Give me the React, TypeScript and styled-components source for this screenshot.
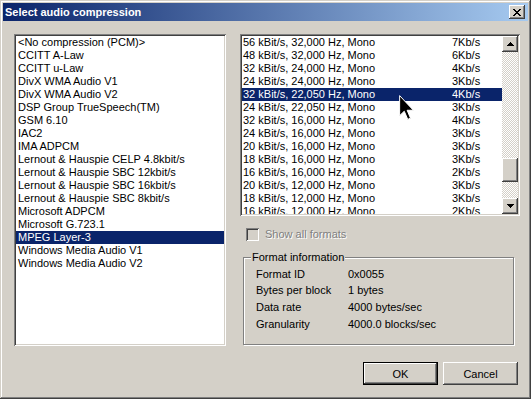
import React from "react";
import styled, { createGlobalStyle, css } from "styled-components";

const FACE = "#d4d0c8";

const GlobalStyle = createGlobalStyle`
  html, body {
    margin: 0;
    padding: 0;
    background: ${FACE};
  }
  body {
    font-family: "Liberation Sans", Arial, sans-serif;
    font-size: 11px;
    color: #000;
  }
  * {
    box-sizing: border-box;
  }
`;

// classic 3d edges
const raised = css`
  box-shadow: inset -1px -1px #404040, inset 1px 1px #fff, inset -2px -2px #808080,
    inset 2px 2px ${FACE};
`;
const sunken = css`
  box-shadow: inset 1px 1px #808080, inset -1px -1px #fff, inset 2px 2px #404040,
    inset -2px -2px ${FACE};
`;

const Window = styled.div`
  width: 531px;
  height: 399px;
  padding: 3px;
  display: flex;
  flex-direction: column;
  background: ${FACE};
  box-shadow: inset -1px -1px #404040, inset 1px 1px ${FACE}, inset -2px -2px #808080,
    inset 2px 2px #fff;
`;

const TitleBar = styled.div`
  height: 18px;
  display: flex;
  align-items: center;
  justify-content: space-between;
  padding: 0 3px 0 2px;
  background: linear-gradient(to right, #0a246a, #a6caf0);
`;

const TitleText = styled.span`
  color: #fff;
  font-weight: bold;
  font-size: 11px;
  white-space: nowrap;
`;

const CloseButton = styled.div`
  width: 16px;
  height: 14px;
  display: flex;
  align-items: center;
  justify-content: center;
  background: ${FACE};
  ${raised};
`;

const Body = styled.div`
  flex: 1;
  display: flex;
  flex-direction: column;
  padding: 13px 8px 0 11px;
`;

const TopRow = styled.div`
  display: flex;
  gap: 14px;
  height: 312px;
`;

const FormatTagList = styled.div`
  width: 212px;
  height: 312px;
  padding: 2px;
  background: #fff;
  overflow: hidden;
  ${sunken};
`;

const ListItem = styled.div<{ $selected?: boolean }>`
  height: 13px;
  line-height: 13px;
  padding-left: 2px;
  white-space: nowrap;
  background: ${(p) => (p.$selected ? "#0a246a" : "transparent")};
  color: ${(p) => (p.$selected ? "#fff" : "#000")};
`;

const RightColumn = styled.div`
  width: 280px;
  display: flex;
  flex-direction: column;
`;

const FormatList = styled.div`
  position: relative;
  height: 182px;
  padding: 2px;
  display: flex;
  background: #fff;
  ${sunken};
`;

const Rows = styled.div`
  flex: 1;
  overflow: hidden;
`;

const FormatRow = styled.div<{ $selected?: boolean }>`
  display: grid;
  grid-template-columns: 209px 1fr;
  height: 13px;
  line-height: 13px;
  padding-left: 1px;
  white-space: nowrap;
  background: ${(p) => (p.$selected ? "#0a246a" : "transparent")};
  color: ${(p) => (p.$selected ? "#fff" : "#000")};
`;

const ScrollBar = styled.div`
  width: 16px;
  display: flex;
  flex-direction: column;
`;

const ScrollButton = styled.div`
  width: 16px;
  height: 16px;
  display: flex;
  align-items: center;
  justify-content: center;
  background: ${FACE};
  ${raised};
`;

const Track = styled.div`
  flex: 1;
  display: flex;
  flex-direction: column;
  background: repeating-conic-gradient(${FACE} 0 25%, #fff 0 50%) 0 0 / 2px 2px;
`;

const Thumb = styled.div<{ $offset: number }>`
  margin-top: ${(p) => p.$offset}px;
  width: 16px;
  height: 24px;
  background: ${FACE};
  ${raised};
`;

const Pointer = styled.svg`
  position: absolute;
  left: 159px;
  top: 61px;
`;

const CheckRow = styled.div`
  margin-top: 12px;
  height: 13px;
  padding-left: 6px;
  display: flex;
  align-items: center;
  gap: 6px;
`;

const CheckBox = styled.div`
  width: 13px;
  height: 13px;
  background: ${FACE};
  ${sunken};
`;

const DisabledLabel = styled.span`
  color: #808080;
  text-shadow: 1px 1px #fff;
  line-height: 13px;
`;

const GroupBox = styled.div`
  position: relative;
  margin: 16px 0 0 3px;
  width: 271px;
  height: 88px;
  border: 1px solid #808080;
  box-shadow: 1px 1px #fff, inset 1px 1px #fff;
  padding: 8px 0 0 12px;
`;

const GroupLabel = styled.span`
  position: absolute;
  top: -7px;
  left: 7px;
  padding: 0 1px;
  line-height: 13px;
  background: ${FACE};
`;

const InfoGrid = styled.div`
  display: grid;
  grid-template-columns: 92px 1fr;
  grid-auto-rows: 16.67px;
  align-items: center;
  line-height: 13px;
`;

const ButtonRow = styled.div`
  margin-top: 16px;
  padding-right: 2px;
  display: flex;
  justify-content: flex-end;
  gap: 5px;
`;

const Button = styled.div<{ $default?: boolean }>`
  width: 75px;
  height: 23px;
  display: flex;
  align-items: center;
  justify-content: center;
  background: ${FACE};
  border: ${(p) => (p.$default ? "1px solid #000" : "none")};
  ${raised};
`;

const formatTags = [
  "<No compression (PCM)>",
  "CCITT A-Law",
  "CCITT u-Law",
  "DivX WMA Audio V1",
  "DivX WMA Audio V2",
  "DSP Group TrueSpeech(TM)",
  "GSM 6.10",
  "IAC2",
  "IMA ADPCM",
  "Lernout & Hauspie CELP 4.8kbit/s",
  "Lernout & Hauspie SBC 12kbit/s",
  "Lernout & Hauspie SBC 16kbit/s",
  "Lernout & Hauspie SBC 8kbit/s",
  "Microsoft ADPCM",
  "Microsoft G.723.1",
  "MPEG Layer-3",
  "Windows Media Audio V1",
  "Windows Media Audio V2",
];

const formats: [string, string][] = [
  ["56 kBit/s, 32,000 Hz, Mono", "7Kb/s"],
  ["48 kBit/s, 32,000 Hz, Mono", "6Kb/s"],
  ["32 kBit/s, 24,000 Hz, Mono", "4Kb/s"],
  ["24 kBit/s, 24,000 Hz, Mono", "3Kb/s"],
  ["32 kBit/s, 22,050 Hz, Mono", "4Kb/s"],
  ["24 kBit/s, 22,050 Hz, Mono", "3Kb/s"],
  ["32 kBit/s, 16,000 Hz, Mono", "4Kb/s"],
  ["24 kBit/s, 16,000 Hz, Mono", "3Kb/s"],
  ["20 kBit/s, 16,000 Hz, Mono", "3Kb/s"],
  ["18 kBit/s, 16,000 Hz, Mono", "3Kb/s"],
  ["16 kBit/s, 16,000 Hz, Mono", "2Kb/s"],
  ["20 kBit/s, 12,000 Hz, Mono", "3Kb/s"],
  ["18 kBit/s, 12,000 Hz, Mono", "3Kb/s"],
  ["16 kBit/s, 12,000 Hz, Mono", "2Kb/s"],
];

const info: [string, string][] = [
  ["Format ID", "0x0055"],
  ["Bytes per block", "1 bytes"],
  ["Data rate", "4000 bytes/sec"],
  ["Granularity", "4000.0 blocks/sec"],
];

const CloseGlyph = () => (
  <svg width="8" height="7" viewBox="0 0 8 7" shapeRendering="crispEdges">
    <path
      fill="#000"
      d="M0 0h2v1H0zM6 0h2v1H6zM1 1h2v1H1zM5 1h2v1H5zM2 2h4v1H2zM3 3h2v1H3zM2 4h4v1H2zM1 5h2v1H1zM5 5h2v1H5zM0 6h2v1H0zM6 6h2v1H6z"
    />
  </svg>
);

const Arrow = ({ down }: { down?: boolean }) => (
  <svg
    width="7"
    height="4"
    viewBox="0 0 7 4"
    shapeRendering="crispEdges"
    style={down ? { transform: "rotate(180deg)" } : undefined}
  >
    <path fill="#000" d="M3 0h1v1H3zM2 1h3v1H2zM1 2h5v1H1zM0 3h7v1H0z" />
  </svg>
);

export default function App() {
  const selectedTag = 15;
  const selectedFormat = 4;

  return (
    <>
      <GlobalStyle />
      <Window>
        <TitleBar>
          <TitleText>Select audio compression</TitleText>
          <CloseButton>
            <CloseGlyph />
          </CloseButton>
        </TitleBar>

        <Body>
          <TopRow>
            <FormatTagList>
              {formatTags.map((t, i) => (
                <ListItem key={t} $selected={i === selectedTag}>
                  {t}
                </ListItem>
              ))}
            </FormatTagList>

            <RightColumn>
              <FormatList>
                <Rows>
                  {formats.map(([name, rate], i) => (
                    <FormatRow key={name + i} $selected={i === selectedFormat}>
                      <span>{name}</span>
                      <span>{rate}</span>
                    </FormatRow>
                  ))}
                </Rows>
                <ScrollBar>
                  <ScrollButton>
                    <Arrow />
                  </ScrollButton>
                  <Track>
                    <Thumb $offset={106} />
                  </Track>
                  <ScrollButton>
                    <Arrow down />
                  </ScrollButton>
                </ScrollBar>

                <Pointer width="15" height="25" viewBox="0 0 12 20">
                  <path
                    d="M0.5 0.5V16.5L4.2 13L7 19.5L9.2 18.5L6.5 12.2H11.5Z"
                    fill="#000"
                    stroke="#fff"
                    strokeWidth="0.8"
                    strokeLinejoin="miter"
                  />
                </Pointer>
              </FormatList>

              <CheckRow>
                <CheckBox />
                <DisabledLabel>Show all formats</DisabledLabel>
              </CheckRow>

              <GroupBox>
                <GroupLabel>Format information</GroupLabel>
                <InfoGrid>
                  {info.map(([k, v]) => (
                    <React.Fragment key={k}>
                      <span>{k}</span>
                      <span>{v}</span>
                    </React.Fragment>
                  ))}
                </InfoGrid>
              </GroupBox>
            </RightColumn>
          </TopRow>

          <ButtonRow>
            <Button $default>OK</Button>
            <Button>Cancel</Button>
          </ButtonRow>
        </Body>
      </Window>
    </>
  );
}
